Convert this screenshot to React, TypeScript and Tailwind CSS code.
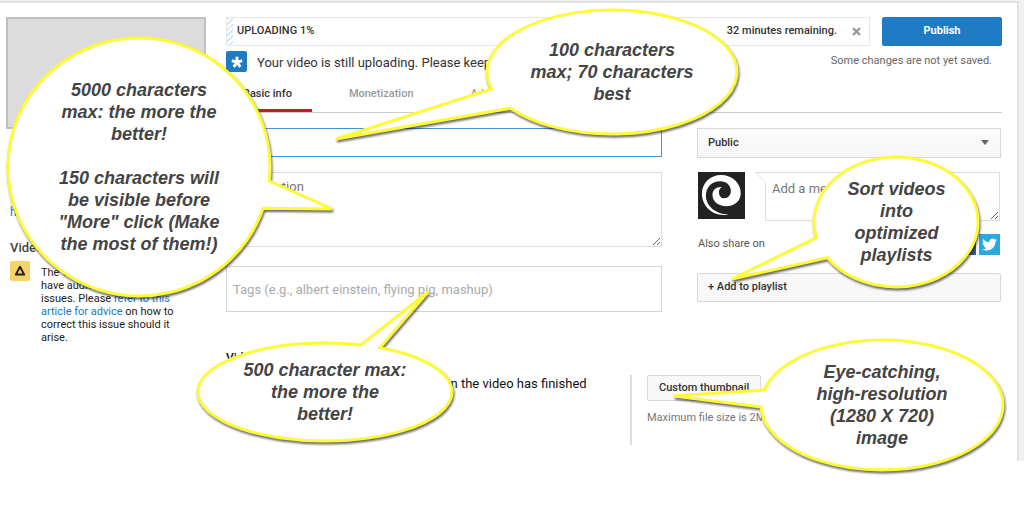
import React from 'react';
import clsx from 'clsx';
import { FaFacebookF, FaTwitter } from 'react-icons/fa';

type Point = [number, number];

type CalloutProps = {
  // position and size of the bubble, the tail hangs out of the box
  className: string;
  rx: number;
  ry: number;
  from: Point;
  to: Point;
  tip: Point;
  children: React.ReactNode;
};

const TABS = ['Basic info', 'Monetization', 'Advanced settings'];

// moves a point onto the edge of the ellipse, so the tail joins it cleanly
function onEdge([x, y]: Point, rx: number, ry: number): Point {
  const t = Math.atan2((y - ry) / ry, (x - rx) / rx);
  return [rx + rx * Math.cos(t), ry + ry * Math.sin(t)];
}

function Callout({ className, rx, ry, from, to, tip, children }: CalloutProps) {
  const a = onEdge(from, rx, ry);
  const b = onEdge(to, rx, ry);

  return (
    <div className={clsx('absolute z-10 flex items-center justify-center', className)}>
      <svg className="absolute inset-0 h-full w-full overflow-visible drop-shadow-[1px_2px_1px_rgba(0,0,0,0.6)]">
        <path
          d={`M${tip} L${a} A${rx} ${ry} 0 1 1 ${b} Z`}
          fill="#fff"
          stroke="#fffa37"
          strokeWidth="3"
        />
      </svg>
      <div className="relative text-center font-['Liberation_Sans',Arial,sans-serif] text-[18px] leading-[22px] font-bold text-[#444] italic">
        {children}
      </div>
    </div>
  );
}

function Logo() {
  return (
    <svg viewBox="12 12 143 143" className="size-[47px] shrink-0 bg-[#222]">
      <path
        fill="#fff"
        d="M105 141C60 150 24 118 24 78C24 45 50 21 82 21C116 21 142 46 142 76C142 100 124 116 98 116C74 116 56 102 56 82C56 66 68 57 84 58C76 64 76 70 76 74C76 84 82 92 92 92C104 92 112 82 112 70C112 52 98 40 80 40C54 40 36 58 36 84C36 112 62 140 105 141Z"
      />
    </svg>
  );
}

function SideColumn() {
  return (
    <aside className="w-[200px] shrink-0">
      <div className="h-28 border-2 border-[#bfc0c1] bg-[#dcdcdc]" />
      <div className="mt-[75px] pl-1">
        <a href="#" className="block text-[12px] leading-4 text-[#167ac6]">
          https://youtu.be/
        </a>
        <h2 className="mt-5 text-[13px] leading-4 font-medium text-[#444]">Video issues</h2>
        <div className="mt-[5px] flex gap-[11px]">
          <span className="flex size-5 shrink-0 items-center justify-center rounded-xs bg-[#f5d36b]">
            <svg viewBox="0 0 12 12" className="size-3">
              <path d="M6 1.8L10.2 9.6H1.8Z" fill="none" stroke="#222" strokeWidth="2" strokeLinejoin="round" />
            </svg>
          </span>
          <p className="pt-[5px] text-[11px] leading-[13px] text-[#222]">
            The video may
            <br />
            have audio copyright
            <br />
            issues. Please{' '}
            <a href="#" className="text-[#167ac6]">
              refer to this
              <br />
              article for advice
            </a>{' '}
            on how to
            <br />
            correct this issue should it
            <br />
            arise.
          </p>
        </div>
      </div>
    </aside>
  );
}

function UploadHeader() {
  return (
    <>
      <div className="flex gap-3">
        <div className="flex h-[29px] flex-1 items-center border border-[#e8e8e8] text-[11px] font-medium text-[#333]">
          <span className="h-full w-[6px] bg-[repeating-linear-gradient(135deg,#cfe6f5_0px,#cfe6f5_1px,#fff_2px,#fff_4px)]" />
          <span className="pl-1">UPLOADING 1%</span>
          <span className="ml-auto">32 minutes remaining.</span>
          <button type="button" aria-label="Cancel upload" className="mr-2 ml-[15px] flex size-[9px] items-center">
            <svg viewBox="0 0 9 9" className="size-[9px]">
              <path d="M1 1L8 8M8 1L1 8" stroke="#999" strokeWidth="2.4" />
            </svg>
          </button>
        </div>
        <button type="button" className="h-[29px] w-[120px] rounded-xs bg-[#1f7bc4] text-[11px] font-bold text-white">
          Publish
        </button>
      </div>

      <div className="mt-[5px] flex h-[21px]">
        <span className="flex size-[21px] items-center justify-center rounded-xs bg-[#1f7bc4]">
          <svg viewBox="0 0 12 12" className="size-3">
            <path d="M6 6.3V.8M6 6.3L11.2 4.6M6 6.3L9.3 10.8M6 6.3L2.7 10.8M6 6.3L.8 4.6" stroke="#fff" strokeWidth="2.8" />
          </svg>
        </span>
        <p className="pl-[10px] text-[13px] leading-6 text-[#333]">
          Your video is still uploading. Please keep this page open.
        </p>
        <p className="ml-auto pr-[10px] text-[11px] leading-[19px] text-[#666]">Some changes are not yet saved.</p>
      </div>
    </>
  );
}

function Tabs() {
  return (
    <nav className="mt-2 flex gap-5 border-b border-[#ccc]">
      {TABS.map((tab, i) => (
        <a
          key={tab}
          href="#"
          className={clsx(
            'h-8 border-b-[3px] pr-5 pl-[17px] text-[11px] leading-7 font-medium',
            i === 0 ? 'border-[#cc181e] text-[#333]' : 'border-transparent text-[#999]'
          )}
        >
          {tab}
        </a>
      ))}
    </nav>
  );
}

function DetailsForm() {
  return (
    <div className="flex-1">
      <input aria-label="Title" className="block h-[29px] w-full border border-[#4496d3] px-[6px] text-[13px] outline-none" />
      <textarea
        aria-label="Description"
        placeholder="Description"
        className="mt-[15px] block h-[75px] w-full resize border border-[#ddd] px-[11px] py-1 text-[13px] leading-5 placeholder:text-[#777]"
      />
      <input
        aria-label="Tags"
        placeholder="Tags (e.g., albert einstein, flying pig, mashup)"
        className="mt-[19px] block h-[46px] w-full border border-[#d5d5d5] px-[6px] text-[13px] placeholder:text-[#aaa]"
      />
    </div>
  );
}

function SharingColumn() {
  return (
    <div className="w-[304px] shrink-0">
      <div className="relative">
        <select
          aria-label="Privacy"
          className="block h-[30px] w-full appearance-none border border-[#d8d8d8] bg-linear-to-b from-[#fcfcfc] to-[#f6f6f6] px-[10px] text-[11px] font-medium text-[#333]"
        >
          <option>Public</option>
          <option>Unlisted</option>
          <option>Private</option>
        </select>
        <svg viewBox="0 0 8 5" className="pointer-events-none absolute top-3 right-3 h-[5px] w-2">
          <path d="M0 0H8L4 5Z" fill="#666" />
        </svg>
      </div>

      <div className="mt-[14px] flex px-px">
        <Logo />
        {/* little pointer that ties the message to the avatar */}
        <svg viewBox="0 0 11 11" className="z-1 -mr-px ml-[10px] size-[11px]">
          <path d="M0 .5H11V10.5L.5 .5" fill="#fff" />
          <path d="M11 .5H.5L10.5 10" fill="none" stroke="#ddd" />
        </svg>
        <textarea
          aria-label="Message"
          placeholder="Add a message"
          className="block h-[49px] min-w-0 flex-1 resize border border-[#ddd] px-[6px] py-[6px] text-[13px] leading-5 placeholder:text-[#777]"
        />
      </div>

      <div className="mt-[13px] flex h-[21px] items-center gap-[3px] px-px">
        <span className="mr-auto text-[11px] text-[#555]">Also share on</span>
        <button type="button" aria-label="Facebook" className="flex size-[21px] items-center justify-center bg-[#3b5998] text-white">
          <FaFacebookF size={13} />
        </button>
        <button type="button" aria-label="Twitter" className="flex size-[21px] items-center justify-center bg-[#28a9e0] text-white">
          <FaTwitter size={15} />
        </button>
      </div>

      <button
        type="button"
        className="mt-[18px] block h-[29px] w-full rounded-xs border border-[#d8d8d8] bg-[#f8f8f8] px-[10px] text-left text-[11px] font-medium text-[#333]"
      >
        + Add to playlist
      </button>
    </div>
  );
}

function Thumbnails() {
  return (
    <section className="mt-[37px]">
      <h2 className="text-[12px] leading-[18px] font-medium text-[#111]">Video thumbnails</h2>
      <div className="mt-2 flex">
        <div className="h-[70px] w-[406px] border-r-2 border-[#ddd] pr-4 pl-2 text-[13px] leading-[17px] text-[#111]">
          Thumbnail selections will appear when the video has finished processing.
        </div>
        <div className="pl-[15px]">
          <button
            type="button"
            className="block h-[26px] rounded-xs border border-[#d8d8d8] bg-[#f8f8f8] px-[11px] text-[11px] font-medium text-[#333]"
          >
            Custom thumbnail
          </button>
          <p className="mt-[9px] text-[11px] leading-4 text-[#767676]">Maximum file size is 2MB.</p>
        </div>
      </div>
    </section>
  );
}

export default function App() {
  return (
    <div className="relative min-h-screen overflow-hidden bg-white font-[Roboto,sans-serif]">
      {/* Upload page */}
      <div className="bg-[#f1f1f1] pt-px pr-[5px]">
        <main className="flex gap-5 border-t-2 border-r-2 border-[#e2e2e2] bg-white pt-[14px] pr-[15px] pb-4 pl-[6px]">
          <SideColumn />
          <div className="min-w-0 flex-1">
            <UploadHeader />
            <Tabs />
            <div className="mt-[15px] flex gap-[35px] pr-px">
              <DetailsForm />
              <SharingColumn />
            </div>
            <Thumbnails />
          </div>
        </main>
      </div>

      {/* Annotations over the page */}
      <Callout
        className="top-[38px] left-[8px] h-[258px] w-[262px]"
        rx={131}
        ry={129}
        tip={[324, 171]}
        from={[254, 170]}
        to={[261, 143]}
      >
        5000 characters
        <br />
        max: the more the
        <br />
        better!
        <br />
        <br />
        150 characters will
        <br />
        be visible before
        <br />
        "More" click (Make
        <br />
        the most of them!)
      </Callout>

      <Callout
        className="top-[10px] left-[487px] h-[124px] w-[250px]"
        rx={125}
        ry={62}
        tip={[-151, 129]}
        from={[4, 79]}
        to={[24, 98]}
      >
        100 characters
        <br />
        max; 70 characters
        <br />
        best
      </Callout>

      <Callout
        className="top-[157px] left-[814px] h-[130px] w-[165px]"
        rx={82}
        ry={65}
        tip={[-82, 122]}
        from={[1, 81]}
        to={[13, 101]}
      >
        Sort videos
        <br />
        into
        <br />
        optimized
        <br />
        playlists
      </Callout>

      <Callout
        className="top-[343px] left-[198px] h-[98px] w-[254px]"
        rx={127}
        ry={49}
        tip={[230, -51]}
        from={[183, 4]}
        to={[163, 2]}
      >
        500 character max:
        <br />
        the more the
        <br />
        better!
      </Callout>

      <Callout
        className="top-[340px] left-[761px] h-[130px] w-[242px]"
        rx={121}
        ry={65}
        tip={[-87, 56]}
        from={[3, 50]}
        to={[0, 67]}
      >
        Eye-catching,
        <br />
        high-resolution
        <br />
        (1280 X 720)
        <br />
        image
      </Callout>
    </div>
  );
}
